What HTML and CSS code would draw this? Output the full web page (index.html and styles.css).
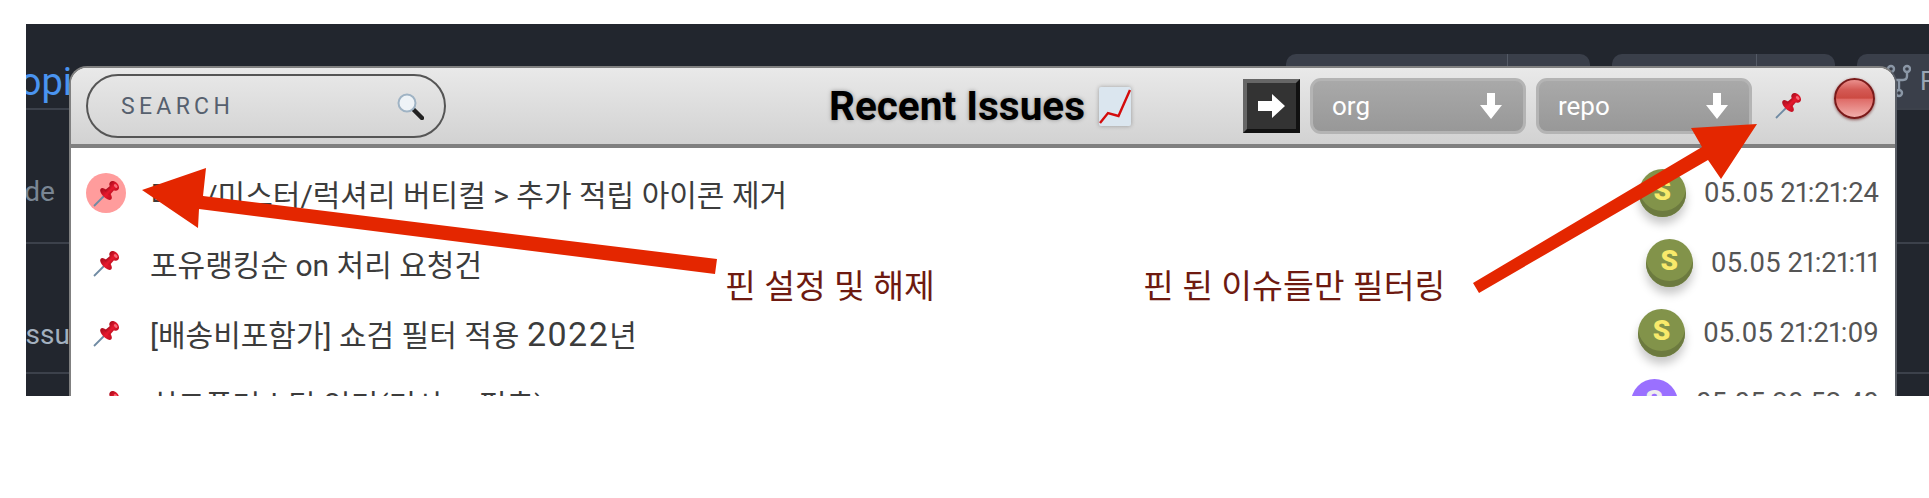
FILE: index.html
```html
<!DOCTYPE html>
<html lang="ko">

<head>
    <meta charset="UTF-8">
    <title>Recent Issues</title>
    <link rel="stylesheet" href="styles.css">
</head>

<body>
    <svg class="defs" width="0" height="0">
        <defs>
            <linearGradient id="pinred" x1="0" y1="0" x2="1" y2="0">
                <stop offset="0" stop-color="#a80d1d" />
                <stop offset=".55" stop-color="#e8182d" />
                <stop offset="1" stop-color="#c01022" />
            </linearGradient>
        </defs>
        <symbol id="pin" viewBox="0 0 27 27">
            <line x1="1" y1="26" x2="11" y2="16" stroke="#6f8aa3" stroke-width="1.8" />
            <g transform="translate(1 26) rotate(45)">
                <ellipse cx="0" cy="-17" rx="7.5" ry="3.6" fill="url(#pinred)" />
                <path d="M-2.8 -27 L2.8 -27 L3.4 -18 L-3.4 -18 Z" fill="url(#pinred)" />
                <ellipse cx="0" cy="-28.5" rx="5.6" ry="4" fill="url(#pinred)" />
                <ellipse cx="1.2" cy="-29.5" rx="2.2" ry="1.3" fill="#f76b78" />
            </g>
        </symbol>
    </svg>

    <div class="page">
        <div class="topbar">
            <span class="topic">Topic</span>
            <div class="actions">
                <div class="ghbtn wide"><span></span></div>
                <div class="ghbtn"><span></span></div>
                <div class="ghbtn fork">
                    <svg width="24" height="34" viewBox="0 0 24 34" fill="none" stroke="#8b97a6" stroke-width="2.4">
                        <circle cx="4" cy="5" r="3" />
                        <circle cx="20" cy="5" r="3" />
                        <circle cx="12" cy="29" r="3" />
                        <path d="M4 8 V12 Q4 16 8 16 H16 Q20 16 20 12 V8 M12 16 V26" />
                    </svg>
                    <b>Fork</b>
                </div>
            </div>
        </div>
        <div class="side">
            <p class="side1">Code</p>
            <p class="side2">Issues</p>
        </div>

        <div class="window">
            <div class="head">
                <div class="search">
                    <span>SEARCH</span>
                    <svg width="28" height="27" viewBox="0 0 28 27">
                        <line x1="17" y1="16" x2="26" y2="25" stroke="#222" stroke-width="4.5" stroke-linecap="round" />
                        <circle cx="11" cy="10" r="8.5" fill="#eef3f7" stroke="#9fb3c4" stroke-width="2" />
                    </svg>
                </div>
                <h1 class="title">
                    Recent Issues
                    <svg class="chart" width="34" height="41" viewBox="0 0 34 41">
                        <rect x="1" y="1" width="32" height="39" rx="2" fill="#dbe6ef" />
                        <path d="M2 37 L10 27 L20.500 30 L32 4" fill="none" stroke="#d40c0c" stroke-width="2.4" />
                    </svg>
                </h1>
                <div class="controls">
                    <button class="go">
                        <svg width="28" height="26" viewBox="0 0 28 26"><path d="M0 8 H14 V1 L27 13 L14 25 V18 H0 Z" fill="#fff" /></svg>
                    </button>
                    <div class="pick">org
                        <svg width="22" height="26" viewBox="0 0 22 26"><path d="M7 0 H15 V12 H22 L11 26 L0 12 H7 Z" fill="#fff" /></svg>
                    </div>
                    <div class="pick">repo
                        <svg width="22" height="26" viewBox="0 0 22 26"><path d="M7 0 H15 V12 H22 L11 26 L0 12 H7 Z" fill="#fff" /></svg>
                    </div>
                    <svg class="pinfilter" width="27" height="27"><use href="#pin" /></svg>
                    <div class="close"></div>
                </div>
            </div>

            <ul class="list">
                <li class="row">
                    <div class="pinbox on"><svg width="27" height="27"><use href="#pin" /></svg></div>
                    <span class="name">티몬/미스터/럭셔리 버티컬 &gt; 추가 적립 아이콘 제거</span>
                    <div class="who olive">S</div>
                    <time>05.05 21:21:24</time>
                </li>
                <li class="row">
                    <div class="pinbox"><svg width="27" height="27"><use href="#pin" /></svg></div>
                    <span class="name">포유랭킹순 on 처리 요청건</span>
                    <div class="who olive">S</div>
                    <time>05.05 21:21:11</time>
                </li>
                <li class="row">
                    <div class="pinbox"><svg width="27" height="27"><use href="#pin" /></svg></div>
                    <span class="name">[배송비포함가] 쇼검 필터 적용 <span class="year">2022</span>년</span>
                    <div class="who olive">S</div>
                    <time>05.05 21:21:09</time>
                </li>
                <li class="row">
                    <div class="pinbox"><svg width="27" height="27"><use href="#pin" /></svg></div>
                    <span class="name">히트플러스딜 인기(기사 ~ 평촌)</span>
                    <div class="who purple">S</div>
                    <time>05.05 20:52:40</time>
                </li>
            </ul>
        </div>
    </div>

    <!-- annotations over the screenshot -->
    <svg class="arrows" width="1929" height="498" viewBox="0 0 1929 498">
        <polygon fill="#e42600" points="142,190 206,168 203,196 717,259 715,274 199,209 198,228" />
        <polygon fill="#e42600" points="1757,124 1691,128 1702,147 1473,283 1479,293 1708,160 1721,179" />
    </svg>
    <p class="note note1">핀 설정 및 해제</p>
    <p class="note note2">핀 된 이슈들만 필터링</p>
</body>

</html>
```

FILE: styles.css
```css
* {
    box-sizing: border-box;
}

body {
    margin: 0;
    height: 498px;
    background: #fff;
    overflow: hidden;
    font-family: "Roboto", "Noto Sans CJK KR", sans-serif;
}

.defs {
    position: absolute;
}

.page {
    position: relative;
    margin: 24px 0 0 26px;
    height: 372px;
    background: #22262e;
    overflow: hidden;
}

/* github page behind the window */
.topbar {
    display: flex;
    justify-content: space-between;
    height: 86px;
    border-bottom: 2px solid #3c414b;
}

.topic {
    margin: 38px 0 0 -27px;
    font-size: 38px;
    line-height: 40px;
    color: #4a94f0;
}

.actions {
    display: flex;
    gap: 22px;
    margin-top: 30px;
    margin-right: -70px;
}

.ghbtn {
    width: 223px;
    height: 54px;
    padding-right: 78px;
    border-radius: 10px;
    background: #3a3f4a;
}

.ghbtn span {
    display: block;
    height: 100%;
    border-right: 1px solid #545a66;
}

.ghbtn.wide {
    width: 304px;
    padding-right: 82px;
}

.ghbtn.fork {
    display: flex;
    align-items: center;
    gap: 9px;
    width: 142px;
    padding: 0 0 0 30px;
    color: #9aa6b5;
}

.ghbtn.fork b {
    font-size: 26px;
    font-weight: 400;
}

.side p {
    margin: 0;
    border-bottom: 2px solid #3c414b;
    font-size: 28px;
    line-height: 36px;
}

.side .side1 {
    height: 134px;
    padding-top: 64px;
    text-indent: -36px;
    color: #7a8694;
}

.side .side2 {
    height: 130px;
    padding-top: 73px;
    text-indent: -8px;
    color: #a3b0bf;
}

.window {
    position: absolute;
    top: 42px;
    left: 43px;
    width: 1828px;
    height: 400px;
    border: 2px solid #808080;
    border-right-color: #5a5e66;
    border-radius: 18px 18px 0 0;
    background: #fff;
}

.head {
    display: grid;
    grid-template-columns: 1fr auto 1fr;
    align-items: center;
    height: 80px;
    padding: 0 20px 0 15px;
    border-bottom: 4px solid #808080;
    border-radius: 16px 16px 0 0;
    background: linear-gradient(#e9e9e9, #d2d2d2);
}

.search {
    display: flex;
    align-items: center;
    justify-content: space-between;
    width: 360px;
    height: 64px;
    padding: 0 20px 0 33px;
    border: 2.5px solid #555;
    border-radius: 32px;
}

.search span {
    font-size: 23px;
    letter-spacing: 4.3px;
    color: #56606e;
}

.title {
    display: flex;
    align-items: center;
    gap: 13px;
    margin: 0;
    font-size: 40.5px;
    font-weight: 700;
    color: #000;
    text-shadow: 0 0 4px rgba(0, 0, 0, .35);
}

.chart {
    filter: drop-shadow(0 0 2px rgba(0, 0, 0, .3));
}

.controls {
    display: flex;
    align-items: center;
    justify-content: flex-end;
}

.go {
    display: flex;
    align-items: center;
    justify-content: center;
    width: 57px;
    height: 54px;
    padding: 0;
    border: 4px solid;
    border-color: #666 #111 #111 #666;
    background: #333;
}

.pick {
    display: flex;
    align-items: center;
    justify-content: space-between;
    width: 216px;
    height: 56px;
    margin-left: 10px;
    padding: 0 21px 0 19px;
    border: 3px solid #b4b4b4;
    border-radius: 11px;
    background: linear-gradient(#a9a9a9, #989898);
    font-size: 26px;
    color: #fff;
}

.pinfilter {
    margin: 0 0 2px 23px;
}

.close {
    width: 41px;
    height: 41px;
    margin: 0 0 16px 32px;
    border: 2.5px solid #7a1a1a;
    border-radius: 50%;
    background: linear-gradient(#ea908d 0, #d45a55 26%, #cc4a42 49%, #df6c68 52%, #f2aeab 100%);
    box-shadow: 0 1px 3px rgba(90, 0, 0, .6);
}

.list {
    margin: 0;
    padding: 10px 0 0;
    list-style: none;
}

.row {
    display: flex;
    align-items: center;
    height: 70px;
    padding: 0 16px 0 15px;
}

.pinbox {
    display: flex;
    align-items: center;
    justify-content: center;
    flex: none;
    width: 40px;
    height: 40px;
    border-radius: 50%;
}

.pinbox.on {
    background: #ff9c9c;
}

.name {
    flex: 1;
    margin-left: 24px;
    font-size: 30px;
    color: #3c3c3c;
}

.year {
    font-size: 34px;
    line-height: 1;
    letter-spacing: 1.5px;
}

.who {
    flex: none;
    width: 47px;
    height: 48px;
    margin-right: 18px;
    border-radius: 50%;
    font-size: 28px;
    font-weight: 900;
    line-height: 43px;
    text-align: center;
}

.olive {
    background: #82934a;
    box-shadow: inset 0 -6px 0 #6c7a3f, 0 7px 10px rgba(0, 0, 0, .22);
    color: #f8ea6b;
}

.purple {
    background: #9a70ff;
    color: #eee;
}

time {
    font-size: 27.4px;
    font-variant-numeric: proportional-nums;
    color: #555;
}

.arrows {
    position: absolute;
    top: 0;
    left: 0;
}

.note {
    position: absolute;
    margin: 0;
    font-size: 33.5px;
    line-height: 40px;
    color: #6e1a10;
}

.note1 {
    top: 267px;
    left: 725px;
}

.note2 {
    top: 267px;
    left: 1143px;
}
```
